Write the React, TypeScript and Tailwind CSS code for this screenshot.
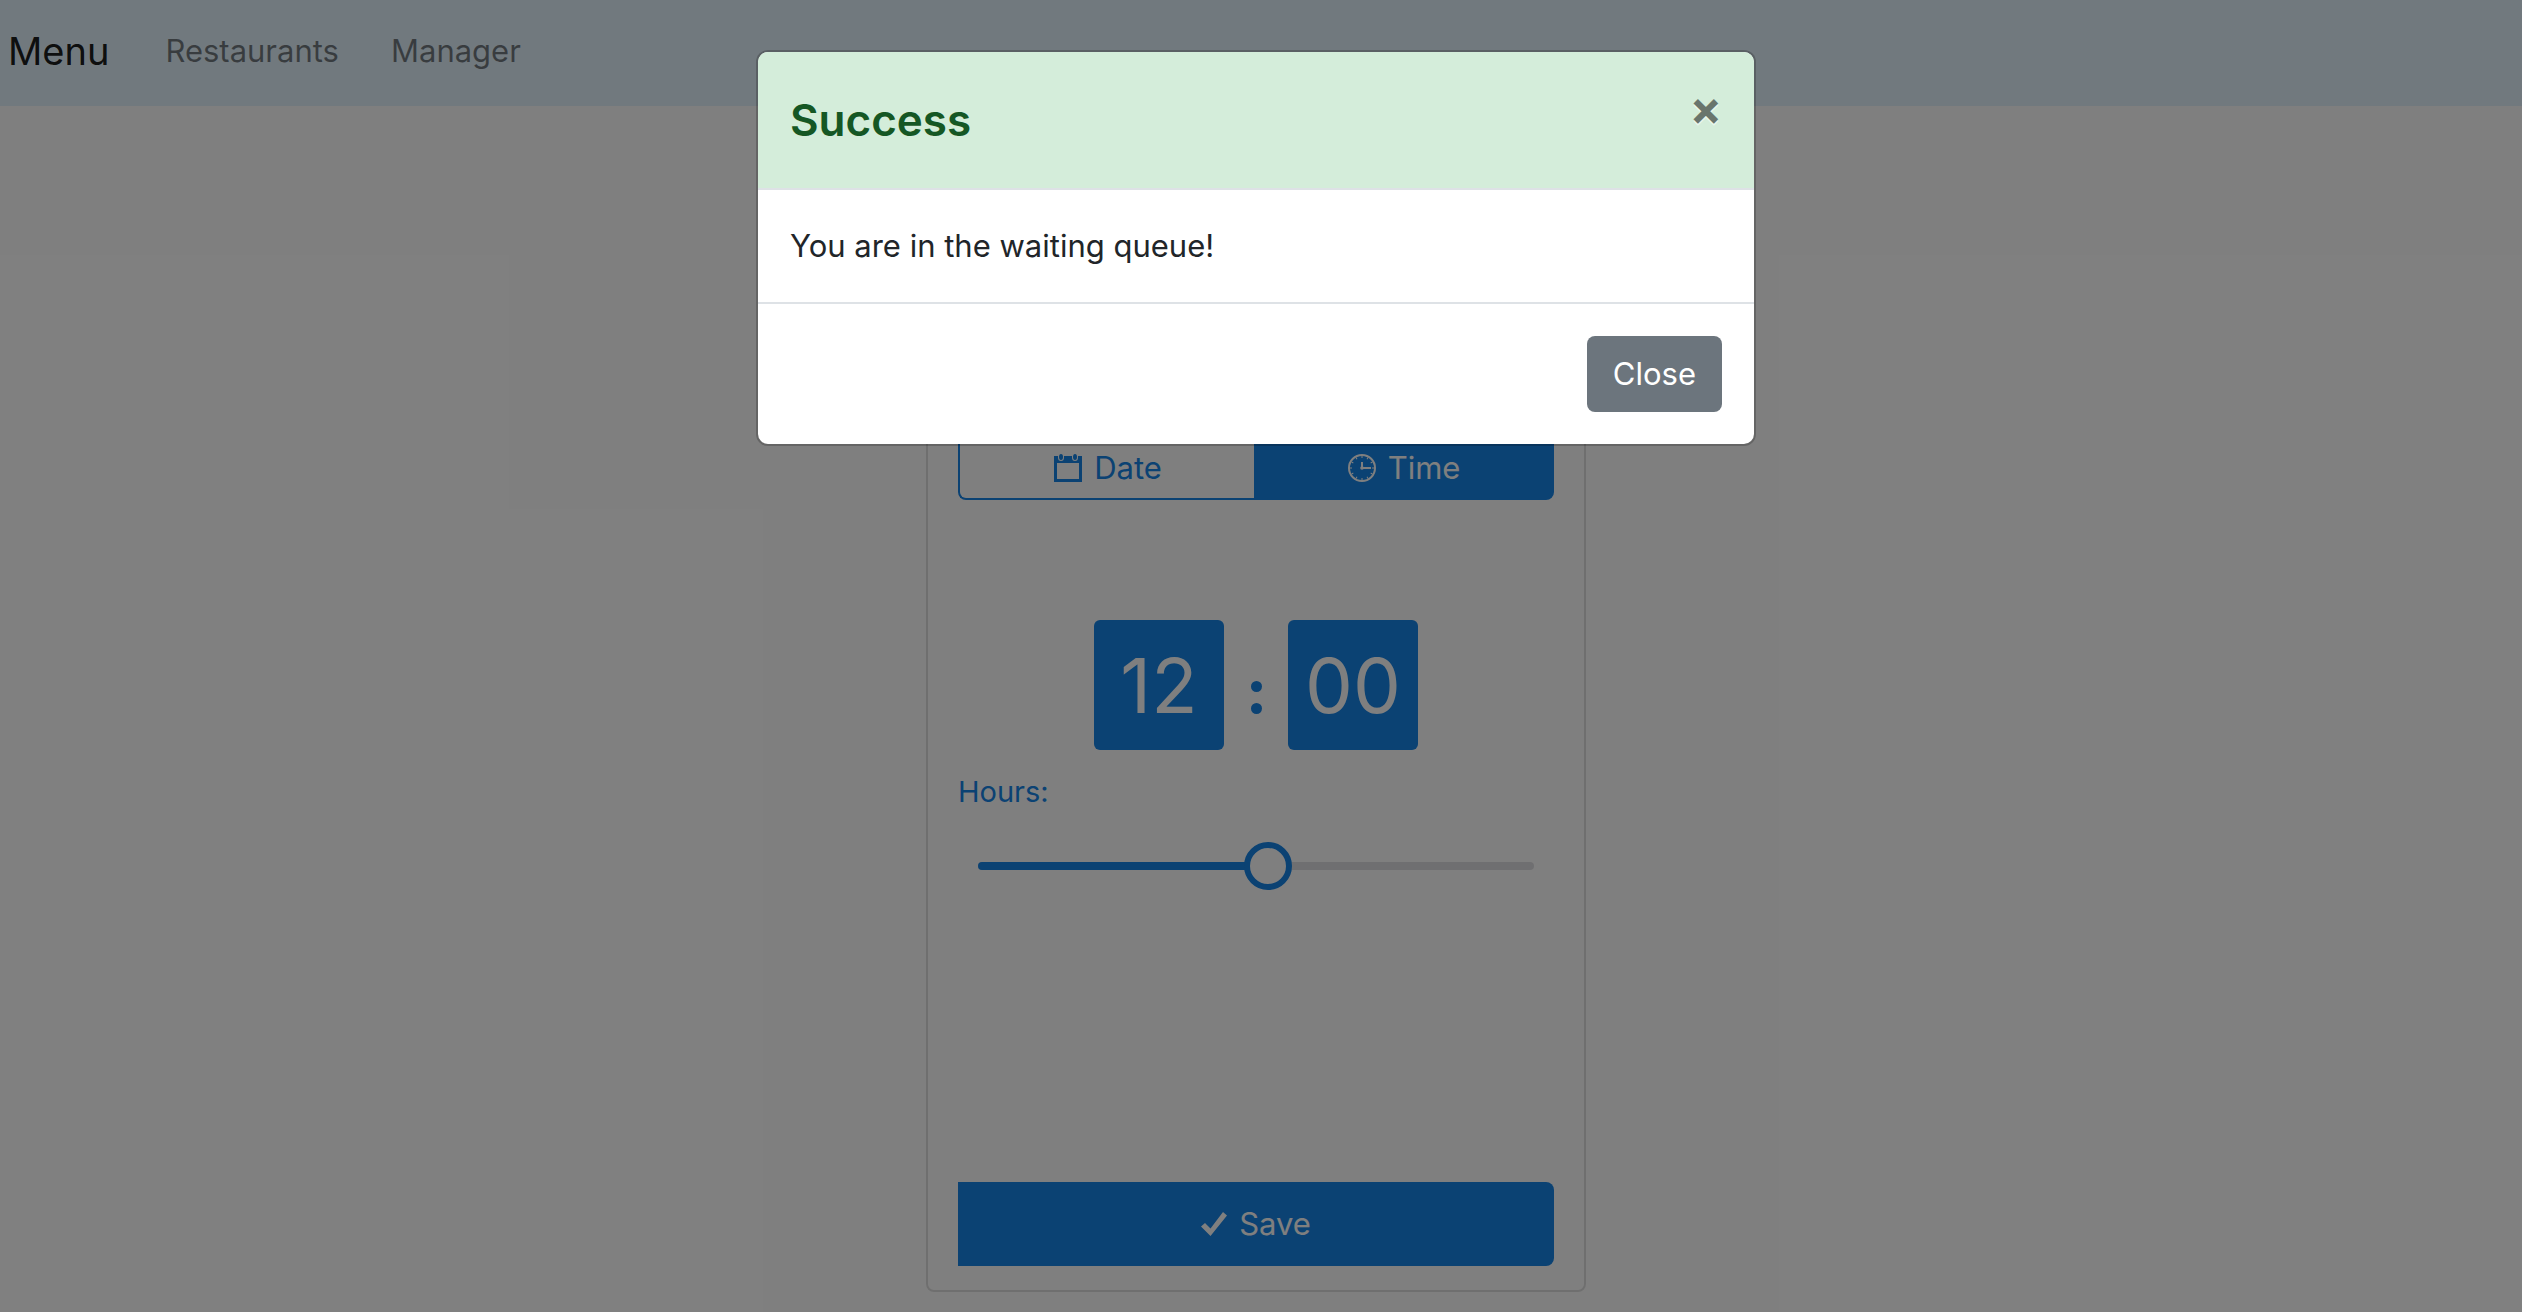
import { useState } from "react";

function CalendarIcon() {
  return (
    <svg viewBox="0 0 28 28" className="size-7 shrink-0" fill="currentColor" aria-hidden="true">
      <path
        fillRule="evenodd"
        d="M0 2h4v1.500a3 3.500 0 0 0 6 0V2h8v1.500a3 3.500 0 0 0 6 0V2h4v26H0ZM3 9v16h22V9Z"
      />
      <ellipse cx="7" cy="3" rx="2" ry="3" />
      <ellipse cx="21" cy="3" rx="2" ry="3" />
    </svg>
  );
}

const ticks = [0, 30, 60, 90, 120, 150, 180, 210, 240, 270, 300, 330];

function ClockIcon() {
  return (
    <svg viewBox="0 0 28 28" className="size-7 shrink-0" fill="none" stroke="currentColor" aria-hidden="true">
      <circle cx="14" cy="14" r="13" strokeWidth="2" />
      {ticks.map((angle) => (
        <path key={angle} d="M14 2v2" strokeWidth="1" transform={`rotate(${angle} 14 14)`} />
      ))}
      <path d="M14 8v6h9" strokeWidth="2" />
      <circle cx="14" cy="14" r="1.800" fill="currentColor" stroke="none" />
    </svg>
  );
}

function CheckIcon() {
  return (
    <svg viewBox="0 0 26 24" className="h-6 w-[26px] shrink-0" fill="currentColor" aria-hidden="true">
      <path d="M0 14.500 4 11l5.500 5.500L22 0l4 3.500L9.500 24Z" />
    </svg>
  );
}

function TimePicker() {
  const [hours, setHours] = useState(12);
  return (
    <section className="mx-auto mt-[298px] w-[660px] rounded-lg border-2 border-[#dfdfdf] px-[30px] pt-[30px] pb-6 text-[#1684e6]">
      <div className="grid h-16 grid-cols-2 text-[31px]">
        <button className="flex items-center justify-center gap-3 rounded-l-lg border-2 border-r-0 border-[#1684e6]">
          <CalendarIcon />
          Date
        </button>
        <button className="-ml-0.5 flex items-center justify-center gap-3 rounded-r-lg bg-[#1684e6] text-white">
          <ClockIcon />
          Time
        </button>
      </div>
      <div className="mt-[120px] flex items-center justify-center text-[76px] leading-none">
        <button className="size-[130px] rounded-md bg-[#1684e6] text-white">
          {String(hours).padStart(2, "0")}
        </button>
        <div className="flex w-16 flex-col items-center gap-[11px] pt-6" role="img" aria-label=":">
          <span className="size-[11px] rounded-full bg-[#1684e6]" />
          <span className="size-[11px] rounded-full bg-[#1684e6]" />
        </div>
        <button className="size-[130px] rounded-md bg-[#1684e6] text-white">00</button>
      </div>
      <label htmlFor="hours" className="mt-5 block text-[29px] leading-[44px]">
        Hours:
      </label>
      <div className="relative mt-7 flex h-12 items-center px-5">
        <div className="h-2 w-full overflow-hidden rounded-full bg-[#dfdfe3]">
          <div className="h-full bg-[#1684e6]" style={{ width: `${(hours / 23) * 100}%` }} />
        </div>
        <input
          id="hours"
          type="range"
          min={0}
          max={23}
          value={hours}
          onChange={(e) => setHours(Number(e.target.value))}
          className="absolute inset-y-0 -right-1 -left-1 appearance-none bg-transparent [&::-webkit-slider-thumb]:size-12 [&::-webkit-slider-thumb]:appearance-none [&::-webkit-slider-thumb]:rounded-full [&::-webkit-slider-thumb]:border-[6px] [&::-webkit-slider-thumb]:border-solid [&::-webkit-slider-thumb]:border-[#1684e6] [&::-webkit-slider-thumb]:bg-white"
        />
      </div>
      <button className="mt-[292px] flex h-[84px] w-full items-center justify-center gap-3 rounded-r-lg bg-[#1684e6] text-[31px] text-white">
        <CheckIcon />
        Save
      </button>
    </section>
  );
}

function SuccessDialog() {
  return (
    <div className="absolute inset-0 bg-black/50 pt-[50px] pr-[10px]">
      <div
        role="dialog"
        aria-modal="true"
        aria-labelledby="dialog-title"
        className="mx-auto w-full max-w-[1000px] rounded-xl border-2 border-black/20 bg-white bg-clip-padding"
      >
        <div className="flex items-start justify-between rounded-t-[10px] border-b-2 border-[#dee2e6] bg-[#d4edda] p-8 text-[#155724]">
          <h4 id="dialog-title" className="text-[44px] leading-[72px] font-semibold">
            Success
          </h4>
          <button
            aria-label="Close dialog"
            className="text-[48px] leading-[48px] font-bold text-black opacity-50 [text-shadow:0_2px_0_#fff]"
          >
            ×
          </button>
        </div>
        <p className="p-8 text-[31px] leading-[48px] text-[#212529]">You are in the waiting queue!</p>
        <div className="flex justify-end border-t-2 border-[#dee2e6] p-8">
          <button className="h-[76px] rounded-lg bg-[#6c757d] px-[26px] text-[31px] text-white">Close</button>
        </div>
      </div>
    </div>
  );
}

export default function App() {
  return (
    <div className="relative min-h-screen bg-white font-['Inter',sans-serif]">
      <nav className="flex h-[106px] items-center bg-[#e3f2fd] px-2 pb-1 text-[31px]">
        <a href="#" className="mr-14 text-[38px] text-black/90">
          Menu
        </a>
        <div className="flex gap-[52px] text-black/50">
          <a href="#">Restaurants</a>
          <a href="#">Manager</a>
        </div>
      </nav>
      <main className="pr-[10px]">
        <TimePicker />
      </main>
      <SuccessDialog />
    </div>
  );
}
